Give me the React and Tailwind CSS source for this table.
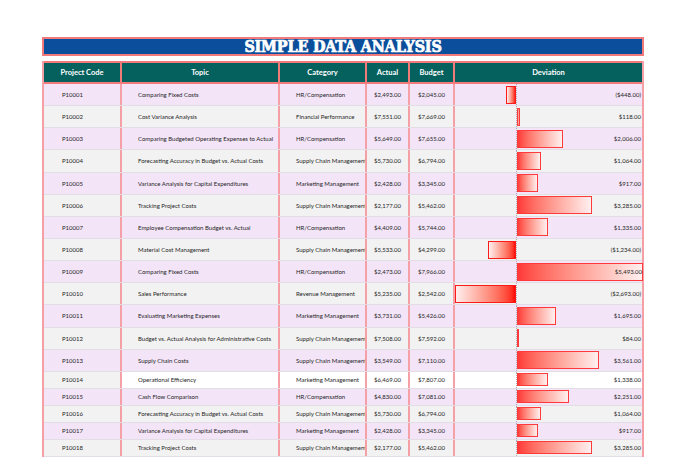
import React from "react";

const rows = [
  ["P10001", "Comparing Fixed Costs", "HR/Compensation", "$2,493.00", "$2,045.00", -448],
  ["P10002", "Cost Variance Analysis", "Financial Performance", "$7,551.00", "$7,669.00", 118],
  ["P10003", "Comparing Budgeted Operating Expenses to Actual", "HR/Compensation", "$5,649.00", "$7,655.00", 2006],
  ["P10004", "Forecasting Accuracy in Budget vs. Actual Costs", "Supply Chain Management", "$5,730.00", "$6,794.00", 1064],
  ["P10005", "Variance Analysis for Capital Expenditures", "Marketing Management", "$2,428.00", "$3,345.00", 917],
  ["P10006", "Tracking Project Costs", "Supply Chain Management", "$2,177.00", "$5,462.00", 3285],
  ["P10007", "Employee Compensation Budget vs. Actual", "HR/Compensation", "$4,409.00", "$5,744.00", 1335],
  ["P10008", "Material Cost Management", "Supply Chain Management", "$5,533.00", "$4,299.00", -1234],
  ["P10009", "Comparing Fixed Costs", "HR/Compensation", "$2,473.00", "$7,966.00", 5493],
  ["P10010", "Sales Performance", "Revenue Management", "$5,235.00", "$2,542.00", -2693],
  ["P10011", "Evaluating Marketing Expenses", "Marketing Management", "$3,731.00", "$5,426.00", 1695],
  ["P10012", "Budget vs. Actual Analysis for Administrative Costs", "Supply Chain Management", "$7,508.00", "$7,592.00", 84],
  ["P10013", "Supply Chain Costs", "Supply Chain Management", "$3,549.00", "$7,110.00", 3561],
  ["P10014", "Operational Efficiency", "Marketing Management", "$6,469.00", "$7,807.00", 1338],
  ["P10015", "Cash Flow Comparison", "HR/Compensation", "$4,830.00", "$7,081.00", 2251],
  ["P10016", "Forecasting Accuracy in Budget vs. Actual Costs", "Supply Chain Management", "$5,730.00", "$6,794.00", 1064],
  ["P10017", "Variance Analysis for Capital Expenditures", "Marketing Management", "$2,428.00", "$3,345.00", 917],
  ["P10018", "Tracking Project Costs", "Supply Chain Management", "$2,177.00", "$5,462.00", 3285],
];

const money = (n) => {
  const s = "$" + Math.abs(n).toLocaleString("en-US") + ".00";
  return n < 0 ? "(" + s + ")" : s;
};

const cols = "grid grid-cols-[78px_158px_87px_43px_45px_1fr]";
const scale = 126 / 5493;

const DevCell = ({ value, tall }) => {
  const w = Math.round(Math.abs(value) * scale);
  const bar = tall ? "h-[18px]" : "h-[13px]";
  return (
    <div className="relative flex h-full">
      <div className="flex w-[61px] items-center justify-end">
        {value < 0 && (
          <div
            className={`${bar} border border-[#ff1a1a] bg-linear-to-r from-[#ffeeee] to-[#ff0000]`}
            style={{ width: w }}
          />
        )}
      </div>
      <div className="w-0 border-l border-dotted border-[#b0a8b0]" />
      <div className="flex flex-1 items-center">
        {value > 0 && (
          <div
            className={`${bar} border border-[#ff3a3a] bg-linear-to-r from-[#ff3838] to-[#fff0f0]`}
            style={{ width: w }}
          />
        )}
      </div>
      <span className="absolute right-[1px] top-0 flex h-full items-center">{money(value)}</span>
    </div>
  );
};

export default function App() {
  return (
    <div className="min-h-[459px] bg-white pt-[37px] pl-[42px] font-['Lato',sans-serif]">
      <div className="w-[602px]">
        <div className="flex h-[19px] items-center justify-center border-2 border-[#f27a7a] bg-[#0b4f9c]">
          <h1 className="font-['DejaVu_Serif_Condensed','DejaVu_Serif',serif] text-[16px] font-bold leading-none tracking-[-0.2px] text-white [-webkit-text-stroke:0.7px_#ffffff]">
            SIMPLE DATA ANALYSIS
          </h1>
        </div>

        <div className="mt-[5px] border-x-2 border-[#f4a0a6]">
          <div className={`${cols} h-[23px] border-y-2 border-[#f27a7a] bg-[#04615d] text-[7.5px] font-bold text-white`}>
            {["Project Code", "Topic", "Category", "Actual", "Budget", "Deviation"].map((h, i) => (
              <div
                key={h}
                className={`flex items-center justify-center ${i < 5 ? "border-r-2 border-[#f27a7a]" : ""}`}
              >
                {h}
              </div>
            ))}
          </div>

          {rows.map((r, i) => {
            const tall = i < 13;
            const bg = i % 2 === 0 ? "bg-[#f3e4f8]" : "bg-[#f2f2f2]";
            const white = i === 13;
            return (
              <div
                key={r[0]}
                className={`${cols} ${tall ? "h-[22.15px]" : "h-[17px]"} ${bg} border-b border-[#e3dde6] text-[6px] text-[#262626]`}
              >
                <div className="flex items-center border-r-2 border-[#f4a0a6] pl-[18px]">{r[0]}</div>
                <div className={`flex items-center border-r-2 border-[#f4a0a6] pl-[16px] ${white ? "bg-white" : ""}`}>{r[1]}</div>
                <div className={`flex items-center overflow-hidden whitespace-nowrap border-r-2 border-[#f4a0a6] pl-[16px] ${white ? "bg-white" : ""}`}>{r[2]}</div>
                <div className={`flex items-center justify-center border-r-2 border-[#f4a0a6] ${white ? "bg-white" : ""}`}>{r[3]}</div>
                <div className={`flex items-center justify-center border-r-2 border-[#f4a0a6] ${white ? "bg-white" : ""}`}>{r[4]}</div>
                <div className={white ? "bg-white" : ""}>
                  <DevCell value={r[5]} tall={tall} />
                </div>
              </div>
            );
          })}
        </div>
      </div>
    </div>
  );
}
